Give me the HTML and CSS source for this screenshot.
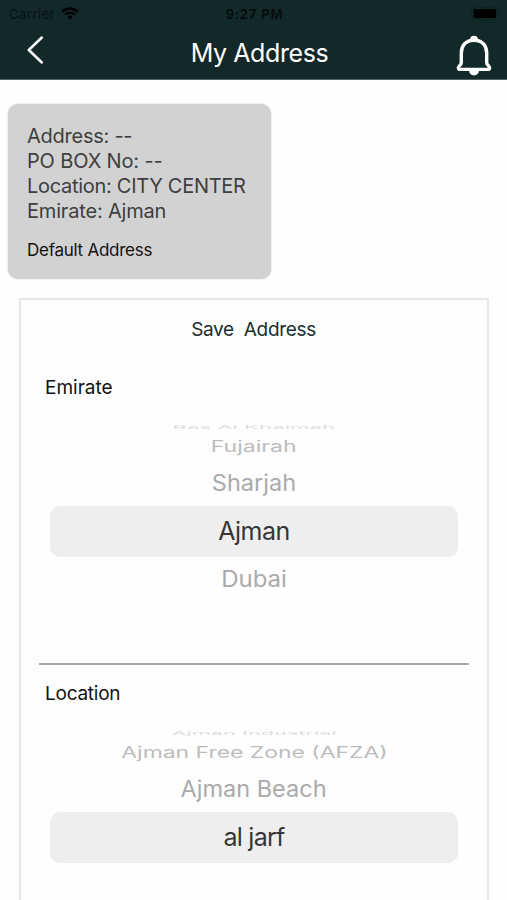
FILE: index.html
```html
<!DOCTYPE html>
<html lang="en">
<head>
<meta charset="utf-8">
<title>My Address</title>
<link rel="stylesheet" href="styles.css">
</head>
<body>
<header class="header">
  <div class="status">
    <div class="carrier"><span>Carrier</span>
      <svg class="wifi" viewBox="0 0 18 13" width="18" height="13"><path d="M1.2 4.6a11.2 11.2 0 0 1 15.6 0M4 7.7a7.2 7.2 0 0 1 10 0" fill="none" stroke="#000" stroke-width="2.5"/><path d="M9 12.6 6.2 9.8a4 4 0 0 1 5.6 0Z"/></svg>
    </div>
    <span class="time">9:27 PM</span>
    <svg class="battery" viewBox="0 0 30 13" width="30" height="13"><rect x=".5" y=".5" width="26" height="12" rx="3" fill="none" stroke="#0f2223"/><rect x="2.5" y="2" width="22.5" height="9" rx="1.5"/><path d="M28 4.5q2 2 0 4Z" fill="#0c1d1e"/></svg>
  </div>
  <nav class="nav">
    <svg class="back" viewBox="0 0 18 28" width="18" height="28"><path d="M15.8 1.5 2.8 14l13 12.5" fill="none" stroke="#fff" stroke-width="2.5" stroke-linecap="round" stroke-linejoin="round"/></svg>
    <h1 class="title">My Address</h1>
    <svg class="bell" viewBox="0 0 36 42" width="36" height="42"><path d="M14 4.8a4 4 0 0 1 8 0l-4 1.5ZM13 35.5h10a5 5 0 0 1-10 0Z" fill="#fff"/><path d="M18 5.2C9.5 5.2 5.3 11 5.3 18v9.5c0 2.8-2.9 3.3-2.9 5.2 0 1 .8 1.7 1.9 1.7h27.4c1.1 0 1.9-.7 1.9-1.7 0-1.9-2.9-2.4-2.9-5.2V18c0-7-4.2-12.8-12.7-12.8Z" fill="none" stroke="#fff" stroke-width="3.4"/></svg>
  </nav>
</header>
<main>
  <section class="card">
    <p class="l1">Address: --</p>
    <p class="l2">PO BOX No: --</p>
    <p class="l3">Location: CITY CENTER</p>
    <p class="l4">Emirate: Ajman</p>
    <p class="default">Default Address</p>
  </section>
  <section class="form">
    <h2 class="form-title">Save &nbsp;Address</h2>
    <div class="field">
      <h3 class="label emirate">Emirate</h3>
      <ul class="picker">
        <li class="edge"><span class="w-ras">Ras Al Khaimah</span></li>
        <li class="far"><span class="w-fuj">Fujairah</span></li>
        <li class="near"><span class="w-sha">Sharjah</span></li>
        <li class="selected"><span class="w-ajm">Ajman</span></li>
        <li class="next"><span class="w-dub">Dubai</span></li>
      </ul>
    </div>
    <div class="field">
      <h3 class="label location">Location</h3>
      <ul class="picker">
        <li class="edge"><span class="w-ind">Ajman Industrial</span></li>
        <li class="far"><span class="w-fre">Ajman Free Zone (AFZA)</span></li>
        <li class="near"><span class="w-bea">Ajman Beach</span></li>
        <li class="selected"><span class="w-jar">al jarf</span></li>
      </ul>
    </div>
  </section>
</main>
</body>
</html>
```
FILE: styles.css
```css
* { box-sizing: border-box; margin: 0; padding: 0; }
body {
  height: 900px;
  overflow: hidden;
  background: #fefefe;
  color: #111;
  font-family: Inter, "Liberation Sans", sans-serif;
}
h1, h2, h3 { font-weight: 400; }
.header { height: 80px; background: #132829; border-bottom: 1px solid #526263; }
.status {
  display: grid;
  grid-template-columns: 1fr auto 1fr;
  align-items: center;
  height: 27px;
  padding: 0 6px 0 9px;
  color: #050b0b;
  font-size: 13px;
}
.carrier { display: flex; align-items: center; gap: 6px; letter-spacing: .5px; color: #071112; }
.time { margin-right: 1px; font-weight: 600; letter-spacing: .85px; }
.battery { justify-self: end; }
.nav {
  display: grid;
  grid-template-columns: 36px 1fr 36px;
  align-items: center;
  height: 52px;
  padding: 0 15px 0 26px;
}
.back { margin-top: -6px; }
.bell { margin-top: 6px; }
.title { padding-left: 1px; color: #fff; font-size: 25px; letter-spacing: -.4px; line-height: 52px; text-align: center; }
.card {
  width: 263px;
  height: 175px;
  margin: 24px 0 0 8px;
  padding: 20px 19px;
  border-radius: 10px;
  background: #d2d2d2;
  box-shadow: 0 0 2px #ccc;
  color: #3e3e3e;
  font-size: 20px;
  line-height: 25px;
  white-space: nowrap;
}
.l1 { letter-spacing: -.25px; }
.l2 { letter-spacing: -.15px; }
.l3 { letter-spacing: -.29px; }
.l4 { letter-spacing: -.18px; }
.card .default { margin-top: 14px; color: #111; font-size: 17px; letter-spacing: -.26px; }
.form {
  width: 470px;
  height: 602px;
  margin: 19px 0 0 19px;
  padding: 0 18px;
  border: 2px solid #e5e8e8;
  border-bottom: 0;
  overflow: hidden;
}
.form-title { height: 66px; padding-right: 1px; color: #1a2e2f; font-size: 19px; letter-spacing: -.33px; line-height: 60px; text-align: center; }
.field { height: 306px; padding-top: 9px; }
.field:first-of-type { height: 297px; }
.field + .field { height: 237px; border-top: 2px solid #a4a6a6; padding-top: 16px; }
.label { padding-left: 6px; color: #111; font-size: 19px; line-height: 25px; }
.location { letter-spacing: -.25px; }
.picker {
  display: flex;
  flex-direction: column;
  margin: 24px 11px 0;
  list-style: none;
  white-space: nowrap;
}
.picker li { display: flex; align-items: center; justify-content: center; }
.picker span { display: block; font-size: 24px; line-height: 30px; }
.picker .edge { height: 5px; color: #ddd; }
.far { height: 34px; padding-top: 1px; color: #bcbcbc; }
.picker .near { height: 43px; padding-bottom: 1px; color: #aaa; }
.picker .selected { height: 51px; padding-bottom: 1px; border-radius: 10px; background: #eee; color: #363636; }
.next { height: 44px; padding-top: 2px; color: #aaa; }
.w-ras { transform: scale(.925, .22); }
.w-ind { transform: scale(.907, .22); }
.w-fuj { transform: scale(.96, .65); }
.w-fre { transform: scale(.955, .65); }
.w-sha, .w-bea { transform: scale(.98, .93); }
.w-dub { transform: scale(1, .93); }
.picker .selected span { font-size: 25px; letter-spacing: -.5px; }
.picker .selected .w-jar { letter-spacing: -.75px; }
```
